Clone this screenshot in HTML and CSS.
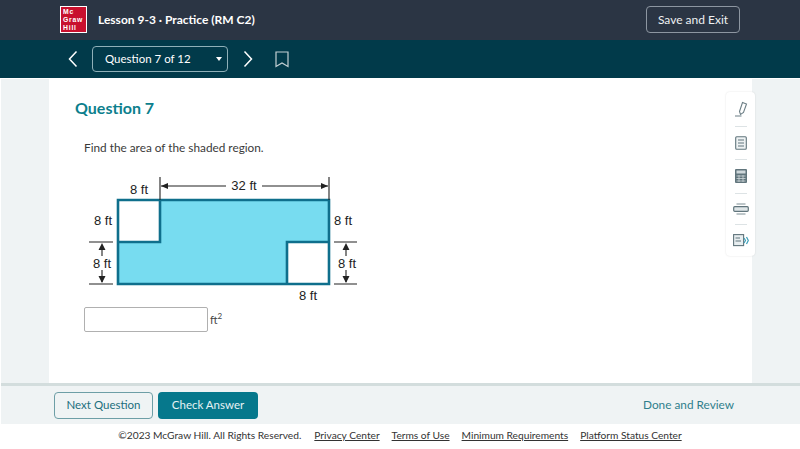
FILE: index.html
```html
<!DOCTYPE html>
<html lang="en">
<head>
<meta charset="utf-8">
<title>Lesson 9-3 · Practice (RM C2)</title>
<link rel="stylesheet" href="styles.css">
</head>
<body>
<header class="topbar">
  <div class="logo"><span>Mc</span><span>Graw</span><span>Hill</span></div>
  <div class="lesson">Lesson 9-3 · Practice (RM C2)</div>
  <button class="save">Save and Exit</button>
</header>
<nav class="navbar">
  <svg class="chev" width="12" height="18" viewBox="0 0 12 18"><path d="M9.5 1.5 L2.5 9 L9.5 16.5" fill="none" stroke="#fff" stroke-width="1.5"/></svg>
  <div class="select"><span>Question 7 of 12</span><i class="caret"></i></div>
  <svg class="chev" width="12" height="18" viewBox="0 0 12 18"><path d="M2.5 1.5 L9.5 9 L2.5 16.5" fill="none" stroke="#fff" stroke-width="1.5"/></svg>
  <svg class="mark" width="14" height="17" viewBox="0 0 14 17"><path d="M1 1 H13 V15.5 L7 12 L1 15.5 Z" fill="none" stroke="#c3d0d4" stroke-width="1.2"/></svg>
</nav>
<main class="stage">
  <section class="card">
    <h1 class="qtitle">Question 7</h1>
    <p class="prompt">Find the area of the shaded region.</p>
    <svg class="figure" width="300" height="145" viewBox="70 170 300 145">
      <path d="M118 200 H329 V284 H118 Z" fill="#77dcf0"/>
      <path d="M118 200 H160 V242 H118 Z M287 242 H329 V284 H287 Z" fill="#fff"/>
      <path d="M118 200 H329 V284 H118 Z M118 242 H160 V200 M287 284 V242 H329" fill="none" stroke="#0f6f8c" stroke-width="2.6"/>
      <path d="M160 177 V200 M329 177 V200" stroke="#222" stroke-width="1.1" fill="none"/>
      <path d="M161 186 H226 M262 186 H328" stroke="#222" stroke-width="1.1" fill="none"/>
      <path d="M161 186 L168 183 V189 Z M328 186 L321 183 V189 Z" fill="#222"/>
      <path d="M89 242 H113 M89 284 H113 M334 242 H357 M334 284 H357" stroke="#222" stroke-width="1.1" fill="none"/>
      <path d="M102 245 V256 M102 270 V282 M346 245 V256 M346 270 V282" stroke="#222" stroke-width="1.1" fill="none"/>
      <path d="M102 243 L98.5 250 H105.5 Z M102 283 L98.5 276 H105.5 Z M346 243 L342.5 250 H349.5 Z M346 283 L342.5 276 H349.5 Z" fill="#222"/>
      <g class="dim">
        <text x="139" y="194" text-anchor="middle">8 ft</text>
        <text x="244" y="190" text-anchor="middle">32 ft</text>
        <text x="103" y="225" text-anchor="middle">8 ft</text>
        <text x="343" y="225" text-anchor="middle">8 ft</text>
        <text x="102" y="268" text-anchor="middle">8 ft</text>
        <text x="347" y="268" text-anchor="middle">8 ft</text>
        <text x="308" y="300" text-anchor="middle">8 ft</text>
      </g>
    </svg>
    <div class="answer"><div class="field"></div><span class="unit">ft<sup>2</sup></span></div>
  </section>
  <aside class="tools">
    <svg width="14" height="16" viewBox="0 0 14 16"><path d="M5.5 10.5 L8.5 1.5 L12.5 3 L9.5 11.5 L6.5 13.5 Z M1 15 H7.5" fill="none" stroke="#6d7f86" stroke-width="1.1"/></svg>
    <hr>
    <svg width="12" height="14" viewBox="0 0 12 14"><rect x=".7" y=".7" width="10.6" height="12.6" rx="1" fill="#eef2f3" stroke="#61757c" stroke-width="1.1"/><path d="M3 4 H9 M3 7 H9 M3 10 H9" stroke="#61757c"/></svg>
    <hr>
    <svg width="12" height="14" viewBox="0 0 12 14"><rect width="12" height="14" rx="1" fill="#61757c"/><rect x="1.5" y="1.5" width="9" height="3" fill="#cfd8db"/><path d="M1.5 7 H10.5 M1.5 9.5 H10.5 M1.5 12 H10.5 M4 6 V13 M8 6 V13" stroke="#cfd8db" stroke-width=".8"/></svg>
    <hr>
    <svg width="16" height="12" viewBox="0 0 16 12"><path d="M3.5 1 H12.5 M3.5 11 H12.5" stroke="#7d8e94"/><rect x=".7" y="3.7" width="14.6" height="4.6" rx="1" fill="#dfe6e8" stroke="#61757c" stroke-width="1.2"/></svg>
    <hr>
    <svg width="16" height="13" viewBox="0 0 16 13"><rect x=".6" y=".6" width="10" height="11" fill="#e8eef0" stroke="#61757c" stroke-width="1.1"/><path d="M2.5 4 H7 M2.5 7 H8" stroke="#61757c"/><path d="M11 4 L12.5 6.5 L11 9 M13.5 3 L15.3 6.5 L13.5 10" fill="none" stroke="#3d9fb8" stroke-width="1.2"/></svg>
  </aside>
</main>
<section class="actions">
  <button class="btn ghost">Next Question</button>
  <button class="btn solid">Check Answer</button>
  <a class="done">Done and Review</a>
</section>
<footer class="foot">
  <span>©2023 McGraw Hill. All Rights Reserved.</span>
  <a>Privacy Center</a><a>Terms of Use</a><a>Minimum Requirements</a><a>Platform Status Center</a>
</footer>
</body>
</html>
```
FILE: styles.css
```css
* { box-sizing: border-box; }
html, body { margin: 0; height: 449px; overflow: hidden; }
body { background: #fff; font-family: "Lato", "Liberation Sans", sans-serif; display: flex; flex-direction: column; color: #333; }

.topbar { height: 40px; flex: none; background: #2b3544; display: flex; align-items: center; padding: 0 60px 1px; }
.logo { width: 27px; height: 27px; background: #c8102e; border: 1px solid #fff; color: #fff; font: 700 6.8px/8px "Liberation Sans", sans-serif; letter-spacing: .8px; display: flex; flex-direction: column; justify-content: center; padding-left: 2px; }
.lesson { margin-left: 11px; color: #fff; font-size: 12px; font-weight: 700; flex: 1; }
.save { width: 94px; height: 27px; background: transparent; border: 1px solid #8d96a1; border-radius: 4px; color: #eef0f2; font: 12px "Lato", sans-serif; padding-bottom: 2px; }

.navbar { height: 38px; flex: none; background: #013a4a; display: flex; align-items: center; padding: 0 0 0 67px; }
.select { width: 136px; height: 26px; margin: 0 14px 0 13px; border: 1px solid #8fb0b8; border-radius: 4px; color: #fff; font-size: 11.5px; display: flex; align-items: center; justify-content: space-between; padding: 0 5px 2px 12px; }
.caret { width: 0; height: 0; border: 3.5px solid transparent; border-top: 4px solid #fff; border-bottom: 0; margin-top: 2px; }
.mark { margin-left: 21px; }

.stage { flex: 1; min-height: 0; margin: 1px 0 0 1px; background: #eff3f4; display: flex; padding: 0 48px; position: relative; }
.card { flex: 1; background: #fff; padding: 20px 0 0 26px; }
.qtitle { margin: 0; color: #0c7f8d; font-size: 16px; font-weight: 700; line-height: 18px; }
.prompt { margin: 24px 0 0 9px; font-size: 11.8px; line-height: 14px; color: #3a3a3a; }
.figure { display: block; margin: 15px 0 0 -5px; }
.dim text { font: 13px "Liberation Sans", sans-serif; fill: #222; }
.answer { display: flex; align-items: center; margin: -8px 0 0 9px; }
.field { width: 124px; height: 25px; background: #fff; border: 1px solid #b0b0b0; border-radius: 2px; }
.unit { margin-left: 2px; font-size: 11px; color: #444; }
.unit sup { font-size: 8px; line-height: 0; }

.tools { position: absolute; left: 725px; top: 13px; width: 29px; height: 164px; background: #fff; border-radius: 4px; box-shadow: 0 0 2px rgba(0,0,0,.12); display: flex; flex-direction: column; align-items: center; justify-content: space-around; padding: 4px 0; }
.tools hr { width: 12px; margin: 0; border: 0; border-top: 1px solid #dde3e5; }

.actions { height: 41px; flex: none; margin-left: 1px; background: #eff3f4; border-top: 3px solid #d3dddd; display: flex; align-items: center; padding: 0 66px 0 53px; gap: 5px; }
.btn { height: 27px; border-radius: 4px; font: 11.5px "Lato", sans-serif; padding-bottom: 2px; }
.ghost { width: 99px; background: transparent; border: 1px solid #6d9ea6; color: #1c6f7d; }
.solid { width: 100px; background: #06788c; border: 0; color: #e6f2f4; }
.done { margin-left: auto; color: #2f7f8c; font-size: 11.8px; padding-bottom: 2px; }

.foot { height: 25px; flex: none; background: #fff; display: flex; align-items: center; justify-content: center; gap: 12px; font-size: 10.2px; color: #333; padding-bottom: 3px; }
.foot span { margin-right: 1px; }
.foot a { text-decoration: underline; }
```
